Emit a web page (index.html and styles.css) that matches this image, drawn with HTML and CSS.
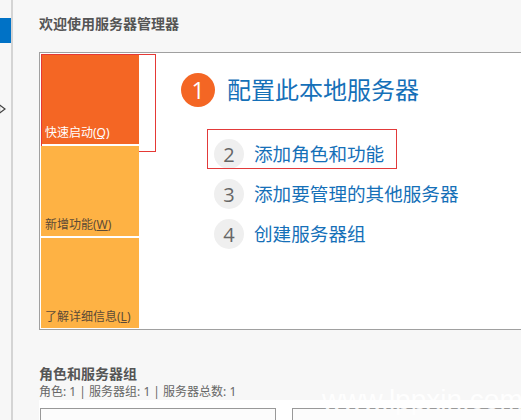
FILE: index.html
```html
<!DOCTYPE html>
<html lang="zh-CN">
<head>
    <meta charset="UTF-8">
    <meta name="viewport" content="width=device-width, initial-scale=1.0">
    <title>服务器管理器</title>
    <link rel="stylesheet" href="styles.css">
</head>
<body>
    <div class="app">
        <aside class="nav">
            <div class="nav-active"></div>
            <svg class="nav-arrow" width="7" height="10" viewBox="0 0 7 10">
                <path d="M0.5 1 L6 5 L0.5 9 Z" fill="none" stroke="#444" stroke-width="1.2"/>
            </svg>
        </aside>

        <main class="content">
            <h2 class="welcome-title">欢迎使用服务器管理器</h2>

            <section class="welcome-panel">
                <div class="tiles">
                    <div class="tile tile-quick">快速启动(<u>Q</u>)</div>
                    <div class="tile tile-light">新增功能(<u>W</u>)</div>
                    <div class="tile tile-light">了解详细信息(<u>L</u>)</div>
                </div>

                <div class="steps">
                    <div class="step-main">
                        <span class="num">1</span>
                        <span class="label">配置此本地服务器</span>
                    </div>
                    <div class="sub-steps">
                        <div class="step marked">
                            <span class="num">2</span>
                            <span class="label">添加角色和功能</span>
                        </div>
                        <div class="step">
                            <span class="num">3</span>
                            <span class="label">添加要管理的其他服务器</span>
                        </div>
                        <div class="step">
                            <span class="num">4</span>
                            <span class="label">创建服务器组</span>
                        </div>
                    </div>
                </div>
            </section>

            <h3 class="groups-title">角色和服务器组</h3>
            <p class="counts">角色: 1 | 服务器组: 1 | 服务器总数: 1</p>

            <div class="groups">
                <div class="group-card"></div>
                <div class="group-card"></div>
            </div>
        </main>
    </div>
    <div class="watermark">www.lppxin.com</div>
</body>
</html>
```

FILE: styles.css
```css
body {
    margin: 0;
    background: #f7f7f7;
    font-family: "Noto Sans", "Noto Sans CJK SC", sans-serif;
    overflow: hidden;
}
.app {
    display: flex;
    height: 420px;
    overflow: hidden;
}
.nav {
    width: 11px;
    flex-shrink: 0;
    border-right: 2px solid #d4d4d4;
    padding-top: 18px;
    overflow: hidden;
}
.nav-active {
    height: 25px;
    background: #0072c6;
}
.nav-arrow {
    display: block;
    margin-top: 61px;
    margin-left: -1px;
}
.content {
    flex: 1;
    min-width: 0;
    padding-left: 26px;
}
.welcome-title {
    margin: 0;
    padding-top: 14px;
    font-size: 14px;
    line-height: 20px;
    font-weight: bold;
    color: #555;
}
.welcome-panel {
    display: flex;
    margin-top: 18px;
    padding: 1px 0 1px 1px;
    border: 1px solid #a0a0a0;
    border-right: 0;
    background: #fff;
}
.tiles {
    width: 98px;
    flex-shrink: 0;
    display: flex;
    flex-direction: column;
    gap: 2px;
}
.tile {
    position: relative;
    height: 90px;
    box-sizing: border-box;
    display: flex;
    align-items: flex-end;
    padding: 0 4px 3px;
    font-size: 12px;
    line-height: 16px;
}
.tile u {
    text-underline-offset: 1px;
}
.tile-quick {
    background: #f46624;
    color: #fff;
}
.tile-quick::after {
    content: "";
    position: absolute;
    left: 0;
    top: 0;
    width: 115px;
    height: 98px;
    box-sizing: border-box;
    border: 1px solid #e53935;
}
.tile-light {
    background: #feb244;
    color: #5c4a36;
}
.steps {
    padding: 19px 0 0 42px;
}
.step-main {
    display: flex;
    align-items: center;
    gap: 12px;
}
.num {
    flex-shrink: 0;
    border-radius: 50%;
    display: flex;
    align-items: center;
    justify-content: center;
    font-family: "Open Sans", "Noto Sans", sans-serif;
}
.step-main .num {
    width: 34px;
    height: 34px;
    background: #f46624;
    color: #fff;
    font-size: 23px;
}
.step-main .label {
    font-size: 24px;
    line-height: 34px;
    color: #1570b8;
    white-space: nowrap;
}
.sub-steps {
    display: flex;
    flex-direction: column;
    gap: 10px;
    margin: 32px 0 0 33px;
}
.step {
    position: relative;
    display: flex;
    align-items: center;
    gap: 10px;
}
.step .num {
    width: 30px;
    height: 30px;
    background: #efefef;
    color: #666;
    font-size: 20px;
}
.step .label {
    font-size: 18.6px;
    line-height: 30px;
    color: #1570b8;
    white-space: nowrap;
}
.step.marked::after {
    content: "";
    position: absolute;
    left: -7px;
    top: -10px;
    width: 190px;
    height: 40px;
    box-sizing: border-box;
    border: 1px solid #e23a3a;
}
.groups-title {
    margin: 34px 0 0;
    font-size: 14px;
    line-height: 20px;
    font-weight: bold;
    color: #555;
}
.counts {
    margin: 0;
    font-size: 12px;
    line-height: 16px;
    color: #666;
}
.groups {
    display: flex;
    gap: 16px;
    height: 40px;
    padding: 8px 0 0 1px;
    background: #fff;
}
.group-card {
    width: 234px;
    flex-shrink: 0;
    height: 30px;
    border: 1px solid #999;
    background: #fcfcfc;
}
.watermark {
    position: absolute;
    left: 322px;
    top: 384px;
    font-family: "Liberation Sans", sans-serif;
    font-size: 28px;
    line-height: 32px;
    color: rgba(255, 255, 255, 0.9);
}
```
